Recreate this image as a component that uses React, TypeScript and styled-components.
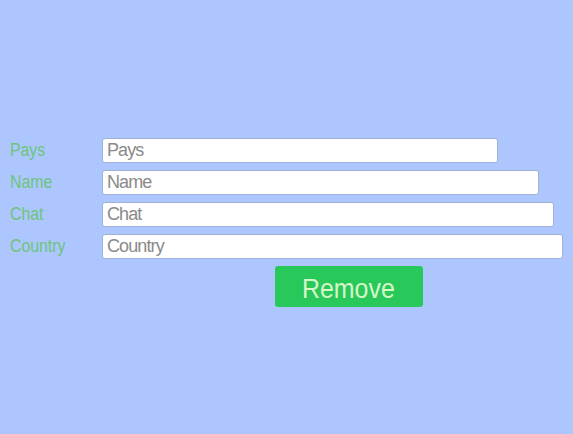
import React from "react";
import styled, { createGlobalStyle } from "styled-components";

const Global = createGlobalStyle`
  html, body { margin: 0; padding: 0; background: #adc7fe; }
  body { font-family: "Liberation Sans", Arial, sans-serif; }
`;

const Page = styled.div`
  width: 573px;
  height: 434px;
  background: #adc7fe;
  padding-top: 138px;
  box-sizing: border-box;
`;

const Form = styled.div`
  display: flex;
  flex-direction: column;
  gap: 7px;
`;

const Row = styled.div`
  display: flex;
  align-items: center;
  height: 25px;
`;

const Label = styled.label`
  width: 92px;
  padding-left: 10px;
  color: #6cc47a;
  font-size: 18px;
  font-family: "Liberation Sans", Arial, sans-serif;
`;

const Narrow = styled.span<{ $s?: number }>`
  display: inline-block;
  transform: scaleX(${(p) => p.$s ?? 0.88});
  transform-origin: left center;
`;

const Input = styled.input<{ $w: number }>`
  width: ${(p) => p.$w}px;
  height: 25px;
  box-sizing: border-box;
  border: 1px solid #9fb0d6;
  border-radius: 3px;
  background: #fff;
  padding: 0 4px;
  font-size: 18px;
  letter-spacing: -0.9px;
  font-family: "Liberation Sans", Arial, sans-serif;
  color: #555;
  outline: none;
  &::placeholder { color: #8a8a8a; }
`;

const ButtonRow = styled.div`
  display: flex;
  padding-left: 275px;
`;

const Button = styled.button`
  width: 148px;
  height: 41px;
  border: none;
  border-radius: 3px;
  background: #29c85a;
  color: #d4f7c8;
  font-size: 28px;
  font-family: "Liberation Sans", Arial, sans-serif;
  padding: 4px 0 0 27px;
  text-align: left;
  cursor: pointer;
`;

const fields = [
  { label: "Pays", w: 396 },
  { label: "Name", w: 437 },
  { label: "Chat", w: 452 },
  { label: "Country", w: 461 },
];

export default function App() {
  return (
    <Page>
      <Global />
      <Form>
        {fields.map((f) => (
          <Row key={f.label}>
            <Label>
              <Narrow>{f.label}</Narrow>
            </Label>
            <Input $w={f.w} placeholder={f.label} />
          </Row>
        ))}
        <ButtonRow>
          <Button>
            <Narrow $s={0.89}>Remove</Narrow>
          </Button>
        </ButtonRow>
      </Form>
    </Page>
  );
}
